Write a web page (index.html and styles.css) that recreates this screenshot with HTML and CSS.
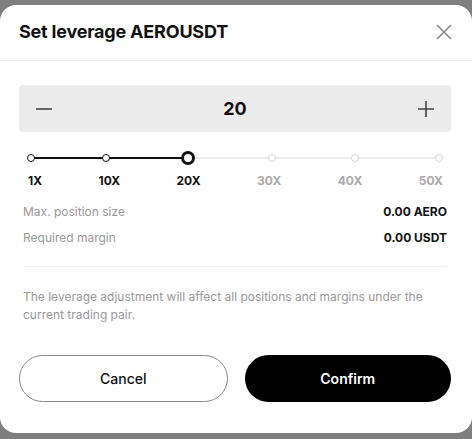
FILE: index.html
```html
<!DOCTYPE html>
<html lang="en">
<head>
    <meta charset="UTF-8">
    <title>Set leverage</title>
    <link rel="stylesheet" href="styles.css">
</head>
<body>
    <div class="backdrop">
        <!-- Leverage Modal -->
        <div class="modal">
            <div class="modal-header">
                <h2>Set leverage AEROUSDT</h2>
                <svg class="close-icon" width="16" height="16" viewBox="0 0 16 16">
                    <path d="M1 1L15 15M15 1L1 15" stroke="#8a8a8a" stroke-width="1.6" fill="none"/>
                </svg>
            </div>

            <div class="modal-body">
                <!-- Stepper -->
                <div class="stepper">
                    <svg width="18" height="18" viewBox="0 0 18 18">
                        <path d="M1 9H17" stroke="#444" stroke-width="1.6"/>
                    </svg>
                    <span class="stepper-value">20</span>
                    <svg width="18" height="18" viewBox="0 0 18 18">
                        <path d="M1 9H17M9 1V17" stroke="#444" stroke-width="1.6"/>
                    </svg>
                </div>

                <!-- Slider -->
                <div class="slider">
                    <div class="track">
                        <div class="track-fill"></div>
                        <span class="mark m1 active"></span>
                        <span class="mark m2 active"></span>
                        <span class="mark m3 current"></span>
                        <span class="mark m4"></span>
                        <span class="mark m5"></span>
                        <span class="mark m6"></span>
                    </div>
                    <div class="slider-labels">
                        <span class="active">1X</span>
                        <span class="active">10X</span>
                        <span class="active">20X</span>
                        <span>30X</span>
                        <span>40X</span>
                        <span>50X</span>
                    </div>
                </div>

                <!-- Info Rows -->
                <div class="info">
                    <div class="info-row">
                        <span>Max. position size</span>
                        <strong>0.00 AERO</strong>
                    </div>
                    <div class="info-row">
                        <span>Required margin</span>
                        <strong>0.00 USDT</strong>
                    </div>
                </div>

                <p class="note">The leverage adjustment will affect all positions and margins under the current trading pair.</p>

                <!-- Buttons -->
                <div class="actions">
                    <button class="btn btn-cancel">Cancel</button>
                    <button class="btn btn-confirm">Confirm</button>
                </div>
            </div>
        </div>
    </div>
</body>
</html>
```

FILE: styles.css
```css
/* Reset Styles */
* {
    margin: 0;
    padding: 0;
    box-sizing: border-box;
}

body {
    font-family: Inter, "Noto Sans", Arial, sans-serif;
    background-color: #7f7f7f;
    color: #111;
    width: 472px;
    height: 439px;
    overflow: hidden;
}

.backdrop {
    padding-top: 5px;
}

/* Modal */
.modal {
    height: 428px;
    background-color: #fff;
    border-radius: 16px;
}

.modal-header {
    display: flex;
    justify-content: space-between;
    align-items: center;
    height: 56px;
    padding: 0 20px 2px 19px;
    border-bottom: 1px solid #f0f0f0;
}

.modal-header h2 {
    font-size: 18px;
    font-weight: 700;
    letter-spacing: -0.2px;
}

.modal-body {
    padding: 24px 21px 0 19px;
}

/* Stepper */
.stepper {
    display: flex;
    justify-content: space-between;
    align-items: center;
    height: 47px;
    padding: 0 16px;
    background-color: #ececec;
    border-radius: 4px;
}

.stepper-value {
    font-size: 18px;
    font-weight: 700;
}

/* Slider */
.slider {
    margin-top: 19px;
    padding: 0 4px;
}

.track {
    position: relative;
    height: 14px;
    margin: 0 8px;
}

.track::before {
    content: "";
    position: absolute;
    left: 0;
    right: 0;
    top: 6px;
    height: 2px;
    background-color: #eeeeee;
}

.track-fill {
    position: absolute;
    left: 0;
    top: 6px;
    height: 2px;
    width: 38.6%;
    background-color: #111;
}

.mark {
    position: absolute;
    top: 3px;
    width: 8px;
    height: 8px;
    margin-left: -4px;
    border-radius: 50%;
    border: 1.5px solid #d6d6d6;
    background-color: #fff;
}

.mark.active {
    border-color: #111;
}

.mark.current {
    top: 0;
    width: 14px;
    height: 14px;
    margin-left: -7px;
    border: 3.5px solid #111;
}

.m1 { left: 0; }
.m2 { left: 18.4%; }
.m3 { left: 38.6%; }
.m4 { left: 59%; }
.m5 { left: 79.4%; }
.m6 { left: 100%; }

.slider-labels {
    display: flex;
    justify-content: space-between;
    margin-top: 8px;
    padding: 0 4px 0 5px;
    font-size: 12px;
    font-weight: 700;
    line-height: 16px;
    color: #aaa;
}

.slider-labels .active {
    color: #111;
}

/* Info Rows */
.info {
    margin: 14px 4px 0;
    padding-bottom: 19px;
    border-bottom: 1px solid #f0f0f0;
}

.info-row {
    display: flex;
    justify-content: space-between;
    font-size: 12px;
    line-height: 18px;
    color: #999;
}

.info-row + .info-row {
    margin-top: 8px;
}

.info-row strong {
    color: #111;
    font-weight: 700;
}

.note {
    margin-top: 21px;
    padding: 0 4px;
    font-size: 12px;
    line-height: 18px;
    color: #999;
}

/* Buttons */
.actions {
    display: flex;
    gap: 17px;
    margin-top: 31px;
}

.btn {
    flex: 1;
    height: 47px;
    border-radius: 24px;
    font-family: inherit;
    font-size: 14px;
    cursor: pointer;
}

.btn-cancel {
    background-color: #fff;
    color: #111;
    border: 1px solid #8a8a8a;
    font-weight: 500;
}

.btn-confirm {
    background-color: #000;
    color: #fff;
    border: none;
    font-weight: 600;
}
```
